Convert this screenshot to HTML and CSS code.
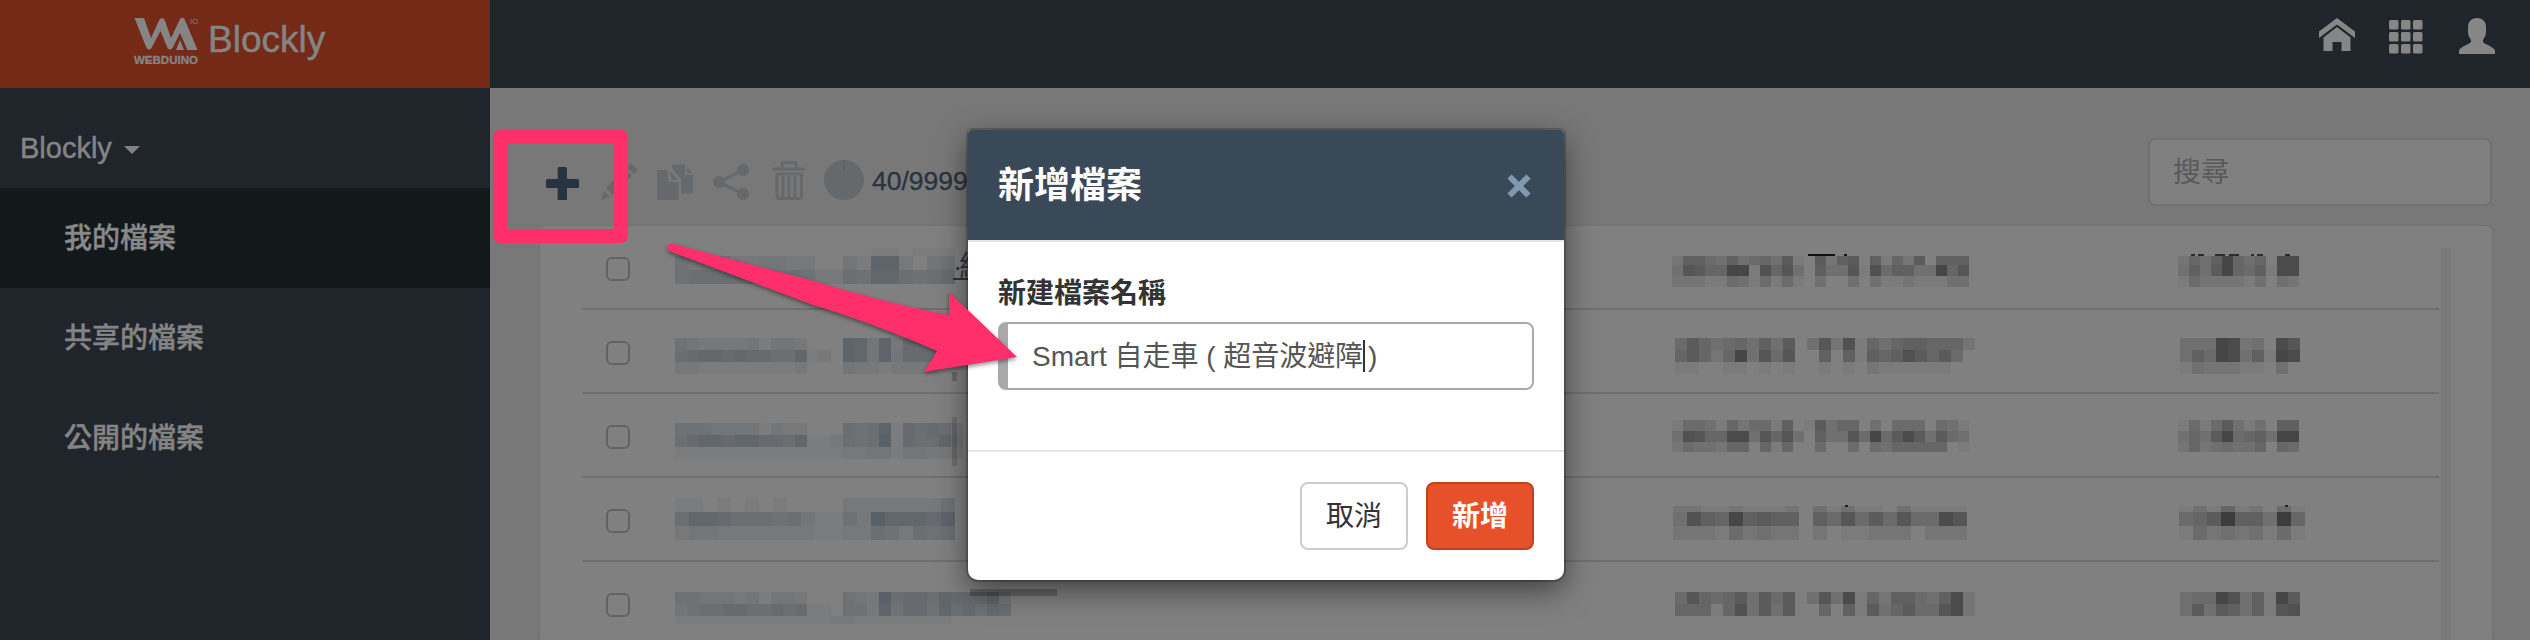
FILE: index.html
```html
<!DOCTYPE html>
<html lang="zh-Hant">
<head>
<meta charset="utf-8">
<title>Webduino Blockly</title>
<link rel="stylesheet" href="styles.css">
</head>
<body>
<div class="app">
  <aside class="sidebar">
    <div class="brand">
      <svg class="brand-mark" width="66" height="50" viewBox="0 0 66 50">
        <path d="M.5 4H10L17 24L25.500 5.500Q28 2.500 30.500 5.500L37 24L46 5Q48 2.500 50.500 5L63.500 36H53.500L46 19L38.500 34Q36 37 33.500 34L26.500 17L17.500 34Q15 37 12.500 34ZM42 36L46 26L50 36Z"/>
        <text class="brand-io" x="56" y="10" textLength="8">IO</text>
        <text class="brand-word" x="0" y="49.500" textLength="64">WEBDUINO</text>
      </svg>
      <span class="brand-name">Blockly</span>
    </div>
    <div class="side-head">Blockly <i class="caret"></i></div>
    <nav class="side-nav">
      <a class="side-item active">我的檔案</a>
      <a class="side-item">共享的檔案</a>
      <a class="side-item">公開的檔案</a>
    </nav>
  </aside>
  <main class="main">
    <header class="topbar">
      <svg width="36" height="36" viewBox="0 0 36 36"><path d="M0 13.500L18 0L36 13.500V20L18 6.500L0 20Z"/><path d="M4.500 19.500L18 9L31.500 19.500V33H22.500V24H13.500V33H4.500Z"/></svg>
      <svg width="34" height="36" viewBox="0 0 34 36"><g transform="translate(-1 2)"><rect width="9.500" height="9.500" rx="1.500"/><rect x="12" width="9.500" height="9.500" rx="1.500"/><rect x="24" width="9.500" height="9.500" rx="1.500"/><rect y="12" width="9.500" height="9.500" rx="1.500"/><rect x="12" y="12" width="9.500" height="9.500" rx="1.500"/><rect x="24" y="12" width="9.500" height="9.500" rx="1.500"/><rect y="24" width="9.500" height="9.500" rx="1.500"/><rect x="12" y="24" width="9.500" height="9.500" rx="1.500"/><rect x="24" y="24" width="9.500" height="9.500" rx="1.500"/></g></svg>
      <svg width="36" height="36" viewBox="0 0 36 36"><path d="M18 0C24 0 27 4 27 9V14C27 18 25 20 24 22V24C25 26 36 29 36 33V36H0V33C0 29 11 26 12 24V22C11 20 9 18 9 14V9C9 4 12 0 18 0Z"/></svg>
    </header>
    <div class="toolbar">
      <div class="tools">
        <svg class="tool tool-on" width="36" height="40"><path d="M1 20.500q0-1.500 1.500-1.500H12.700V8.500q0-1.500 1.500-1.500h6.300q1.500 0 1.500 1.500V19h10.500q1.500 0 1.500 1.500v6q0 1.500-1.500 1.500H22V40H12.700V28H2.500q-1.500 0-1.500-1.500Z"/></svg>
        <svg class="tool" width="36" height="40"><path d="M0 40L3 31L9 37ZM5 28L24 9L31 16L12 35ZM26 7L30 3L37 10L33 14Z"/></svg>
        <svg class="tool" width="36" height="40"><path d="M0 10H11V22H21.500V40H0ZM12.500 10.500L21 20H15ZM15 4.500H28V15H36V33.500H24V19L15 8ZM30 7L35.500 13H30Z"/></svg>
        <svg class="tool" width="36" height="40"><circle cx="6" cy="22" r="6"/><circle cx="30" cy="10" r="6"/><circle cx="30" cy="34" r="6"/><path class="tool-line" d="M30 10L6 22L30 34"/></svg>
        <svg class="tool" width="36" height="40"><path class="tool-line" d="M3.500 9H36M13 8V4.500q0-2 2-2H25q2 0 2 2V8M8 14H32.500V36q0 2.500-2.500 2.500H10.500q-2.500 0-2.500-2.500ZM14 16V38M20 16V38M26 16V38"/></svg>
        <svg class="tool quota" width="40" height="40"><circle cx="20" cy="20" r="20"/><path class="quota-hand" d="M20 0V11"/></svg>
        <span class="count">40/9999</span>
      </div>
      <div class="search">搜尋</div>
    </div>
    <section class="panel">
      <div class="list" id="list"></div>
      <div class="track"></div>
    </section>
  </main>
</div>

<div class="modal">
  <div class="modal-head">
    <span class="modal-title">新增檔案</span>
    <svg width="28" height="28" viewBox="0 0 28 28"><path d="M4.500 4.500L23.500 23.500M23.500 4.500L4.500 23.500"/></svg>
  </div>
  <div class="modal-body">
    <label class="field-label">新建檔案名稱</label>
    <div class="field">Smart 自走車 ( 超音波避障<i class="cursor"></i> )</div>
  </div>
  <div class="modal-foot">
    <button class="btn">取消</button>
    <button class="btn btn-primary">新增</button>
  </div>
</div>

<div class="highlight"></div>
<svg class="arrow" width="370" height="150" viewBox="0 0 370 150">
  <path d="M13.500 5L150 41Q230 65 289 76V53L357 118L264 133L277 112Q210 83 153 66L9 12Q4 5 13.500 5Z"/>
</svg>
<script src="list.js"></script>
</body>
</html>
```

FILE: styles.css
```css
* { box-sizing: border-box; }

body {
  margin: 0;
  width: 2530px;
  height: 640px;
  overflow: hidden;
  position: relative;
  background: #787878;
  font-family: "Liberation Sans", "Noto Sans CJK TC", sans-serif;
  font-size: 28px;
}

svg { display: block; flex: none; }

.app { display: flex; height: 640px; }

/* Sidebar */
.sidebar {
  width: 490px;
  flex: none;
  background: #1f252b;
  color: #848484;
  font-weight: 500;
}
.brand {
  height: 88px;
  padding: 14px 0 0 134px;
  display: flex;
  gap: 8px;
  background: #742a17;
}
.brand-mark { fill: #858585; }
.brand-io { font-size: 7.5px; }
.brand-word { font-size: 11.5px; font-weight: bold; stroke: #858585; stroke-width: .3px; }
.brand-name { font-size: 37px; line-height: 52px; -webkit-text-stroke: .5px #848484; }
.side-head {
  height: 100px;
  padding: 20px 0 0 20px;
  display: flex;
  gap: 12px;
  align-items: center;
  font-size: 29px;
  line-height: 80px;
  -webkit-text-stroke: .5px #848484;
}
.caret {
  border: 8px solid transparent;
  border-top-color: #848484;
  border-bottom: 0;
  margin-top: 3px;
}
.side-item {
  display: block;
  height: 100px;
  padding: 2px 0 0 64px;
  line-height: 98px;
  -webkit-text-stroke: .4px #848484;
}
.side-item.active { background: #13181b; color: #8a8a8a; }

/* Header */
.main { flex: 1; display: flex; flex-direction: column; min-width: 0; }
.topbar {
  height: 88px;
  flex: none;
  padding: 18px 35px 0 0;
  display: flex;
  justify-content: flex-end;
  gap: 35px;
  background: #1f252b;
  fill: #868686;
}
.topbar svg { overflow: visible; }

/* Toolbar */
.toolbar {
  height: 138px;
  flex: none;
  padding: 50px 38px 0 55px;
  display: flex;
  justify-content: space-between;
}
.tools { display: flex; gap: 20px; padding-top: 22px; height: 62px; }
.tool { fill: #65696c; overflow: visible; }
.tool-on { fill: #27343f; }
.tool-line { fill: none; stroke: #65696c; stroke-width: 3; }
.quota { margin-left: -1px; }
.quota-hand { stroke: #5c6063; stroke-width: 1.5; }
.count {
  margin-left: -12px;
  font-size: 26.5px;
  line-height: 43px;
  color: #28333d;
  -webkit-text-stroke: .3px #28333d;
}
.search {
  width: 344px;
  height: 68px;
  padding-left: 23px;
  border: 2px solid #717171;
  border-radius: 7px;
  background: #808080;
  color: #5a5a5a;
  line-height: 66px;
}

/* File list */
.panel {
  flex: 1;
  min-height: 0;
  margin: 0 38px 0 50px;
  padding: 22px 41px 0 42px;
  display: flex;
  gap: 2px;
  border-radius: 6px 6px 0 0;
  background: #808080;
  box-shadow: 0 0 3px #6c6c6c;
}
.list { flex: 1; overflow: hidden; }
.track { width: 10px; background: #7a7a7a; }
.row {
  height: 84px;
  display: grid;
  grid-template-columns: 93px 998px 537px 1fr;
  border-bottom: 2px solid #6f6f6f;
}
.row:first-child { margin-top: -22px; }
.check {
  width: 24px;
  height: 24px;
  margin: 31px 0 0 24px;
  border: 2px solid #636363;
  border-radius: 6px;
}
.mosaic { overflow: visible; height: 82px; width: 100%; }
.row:first-child .cell-name { display: flex; position: relative; }
.tail {
  position: absolute;
  left: 278px;
  top: 21px;
  line-height: 40px;
  letter-spacing: -3px;
  color: #2a3641;
  text-decoration: underline;
}

/* Dialog */
.modal {
  position: absolute;
  left: 968px;
  top: 130px;
  width: 596px;
  height: 450px;
  border-radius: 4px 4px 10px 10px;
  background: #fff;
  box-shadow: 0 0 0 2px rgba(0, 0, 0, .2), 0 10px 30px rgba(0, 0, 0, .5);
}
.modal-head {
  height: 112px;
  padding: 2px 31px 0 30px;
  display: flex;
  justify-content: space-between;
  align-items: center;
  border-bottom: 2px solid #e5e5e5;
  border-radius: 4px 4px 0 0;
  background: #3a4957;
}
.modal-head svg { stroke: #8099ae; stroke-width: 6; }
.modal-title { font-size: 36px; font-weight: bold; line-height: 50px; color: #fff; }
.modal-body { height: 210px; padding: 30px 30px 0; border-bottom: 2px solid #e5e5e5; }
.field-label { display: block; height: 50px; line-height: 43px; font-weight: bold; color: #333; }
.field {
  height: 68px;
  padding-left: 24px;
  border: 2px solid #a9a9a9;
  border-left-width: 10px;
  border-radius: 8px;
  line-height: 66px;
  color: #555;
  white-space: pre;
}
.cursor { display: inline-block; width: 2px; height: 32px; margin-right: -5px; background: #333; vertical-align: -6px; }
.modal-foot { padding: 30px 30px 0; display: flex; justify-content: flex-end; gap: 18px; }
.btn {
  width: 108px;
  height: 68px;
  padding: 2px 0 0;
  border: 2px solid #ccc;
  border-radius: 8px;
  background: #fff;
  color: #333;
  font: inherit;
  line-height: 60px;
}
.btn-primary { border-color: #c2401c; background: #e75129; color: #fff; font-weight: bold; }

/* Annotations */
.highlight {
  position: absolute;
  left: 493px;
  top: 130px;
  width: 135px;
  height: 113px;
  border: 14px solid #ff2f6c;
  border-radius: 7px;
}
.arrow { position: absolute; left: 660px; top: 239px; fill: #ff2f6c; filter: drop-shadow(0 2px 2px rgba(0, 0, 0, .45)); }
```

FILE: list.js
```js
// Each redacted cell: x, y, cell width, then [height, levels] bands from top to bottom.
const names = [
  [0, 18, 14, [12, "00000000000000110111"], [14, "43342233220031882034"], [14, "45555454542254775456"]],
  [0, 28, 12, [12, "4322223133200087382655"], [12, "5677676655712087383666"], [12, "2211111111200032212222"]],
  [0, 28.5, 12, [12, "444333313220005458165653"], [12, "567767766571125459165574"], [12, "111111111111112233133222"]],
  [0, 20, 14, [14, "11010101000022222224"], [14, "57765554531142977768"], [14, "23322222221122542545"]],
  [0, 30, 12, [12, "44333231332000432956657666830"], [12, "34556655656110442846647564650"], [8, "11111111111112211111111000000"]]
];
const dates = [
  [-1, 30, 11, [9, "266436345371072670615270666"], [11, "38755bb19583063381946633b58"], [11, "222114314141030030311211133"]],
  [2, 28, 12, [12, "4753453637038291535665552"], [12, "57525b3848006061656975740"], [12, "1100110101001010211111100"]],
  [-1, 25.7, 11, [11, "144315244160173550304440431"], [11, "39855aa38583063384b47a73743"], [10, "243325505150040040435555501"]],
  [0, 28, 14, [6, "221121112031311031111"], [14, "3965b67660648474844a8"], [14, "222142322020112220222"]],
  [2, 29.7, 12, [12, "48545737470383a15266436a2"], [12, "55515937370050617357448a2"]]
];
const types = [
  [-32, 30, 11, [9, "2536b5350aa"], [11, "3637b5461aa"], [11, "14222213032"]],
  [-30, 28, 12, [12, "333ba230a8"], [12, "364ba361ba"], [12, "1322211030"]],
  [-32, 25.7, 11, [11, "14147313066"], [11, "3537b4563bb"], [10, "25234335054"]],
  [-31, 28, 14, [6, "131512041"], [14, "457d663d5"], [14, "142323141"]],
  [-30, 29.7, 12, [12, "344b9361b7"], [12, "3737636189"]]
];
const rect = (x, y, w, h, fill, a) =>
  `<rect x="${x}" y="${y}" width="${w}" height="${h}" fill="${fill}" fill-opacity="${a}"/>`;
function mosaic(spec, fill, step, extra) {
  const [x, y, size, ...bands] = spec;
  let top = y, out = "";
  for (const [h, levels] of bands) {
    [...levels].forEach((c, i) => {
      const v = parseInt(c, 16);
      if (v) out += rect(x + i * size, top, size, h, fill, (v * step).toFixed(3));
    });
    top += h;
  }
  return `<svg class="mosaic" shape-rendering="crispEdges">${out}${extra || ""}</svg>`;
}
const nameExtra = ["", rect(277, 62, 5, 9, "#000", .2), rect(277, 23, 5, 49, "#000", .15), "", rect(295, 27, 87, 7, "#000", .22)];
const dateExtra = [rect(135, 28, 27, 2, "#111", 1) + rect(171, 28, 3, 2, "#111", 1), "", "", rect(172, 27, 3, 2, "#222", 1), ""];
const typeExtra = [
  [[-19, 4], [-12, 6], [5, 10], [19, 10], [41, 3], [47, 6], [75, 5]].map(([x, w]) => rect(x, 28, w, 2, "#222", .9)).join(""),
  "", "", rect(75, 27, 3, 2, "#222", 1), ""
];
document.getElementById("list").innerHTML = names.map((n, i) => `
  <div class="row">
    <div class="check"></div>
    <div class="cell-name">${mosaic(n, "#2f3d4a", .052, nameExtra[i])}${i ? "" : '<span class="tail">·經</span>'}</div>
    <div>${mosaic(dates[i], "#000", .041, dateExtra[i])}</div>
    <div>${mosaic(types[i], "#000", .041, typeExtra[i])}</div>
  </div>`).join("");
```
